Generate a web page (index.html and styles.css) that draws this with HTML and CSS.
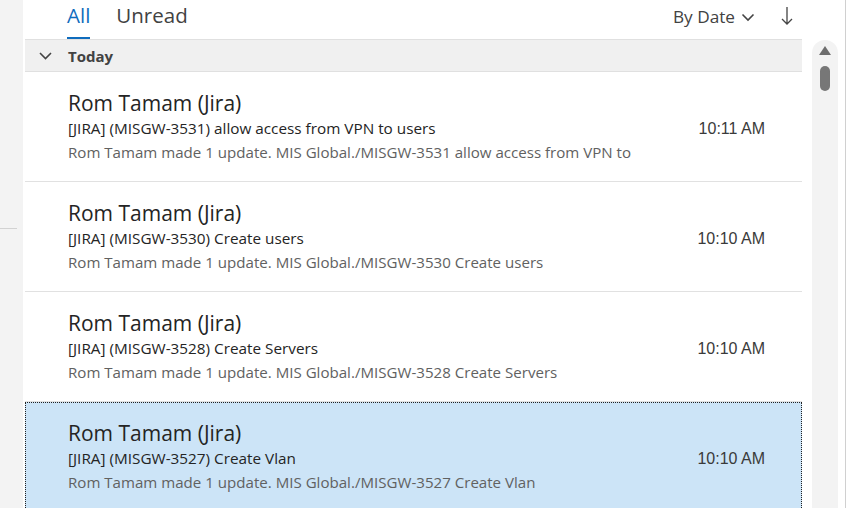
FILE: index.html
```html
<!DOCTYPE html>
<html>
<head>
<meta charset="utf-8">
<title>Inbox</title>
<link rel="stylesheet" href="styles.css">
</head>
<body>
	<div class="rail"><div class="rail-line"></div></div>
	<div class="pane">
		<div class="toolbar">
			<div class="tabs">
				<span class="tab active">All</span>
				<span class="tab">Unread</span>
			</div>
			<div class="sort">
				<span>By Date</span>
				<svg class="chev" width="14" height="9" viewBox="0 0 14 9"><path d="M1.5 1.5 L7 7 L12.5 1.5" fill="none" stroke="#444" stroke-width="1.6"/></svg>
				<svg class="arrow" width="12" height="20" viewBox="0 0 12 20"><path d="M6 1 V18 M1 13 L6 18 L11 13" fill="none" stroke="#444" stroke-width="1.3"/></svg>
			</div>
		</div>
		<div class="body">
			<div class="list">
				<div class="group">
					<svg width="13" height="8" viewBox="0 0 13 8"><path d="M1 1 L6.5 6.5 L12 1" fill="none" stroke="#444" stroke-width="1.6"/></svg>
					<span>Today</span>
				</div>
				<div class="mail">
					<div class="from">Rom Tamam (Jira)</div>
					<div class="line"><span class="subject">[JIRA] (MISGW-3531) allow access from VPN to users</span><span class="time">10:11 AM</span></div>
					<div class="preview">Rom Tamam made 1 update. MIS Global./MISGW-3531 allow access from VPN to</div>
				</div>
				<div class="mail">
					<div class="from">Rom Tamam (Jira)</div>
					<div class="line"><span class="subject">[JIRA] (MISGW-3530) Create users</span><span class="time">10:10 AM</span></div>
					<div class="preview">Rom Tamam made 1 update. MIS Global./MISGW-3530 Create users</div>
				</div>
				<div class="mail">
					<div class="from">Rom Tamam (Jira)</div>
					<div class="line"><span class="subject">[JIRA] (MISGW-3528) Create Servers</span><span class="time">10:10 AM</span></div>
					<div class="preview">Rom Tamam made 1 update. MIS Global./MISGW-3528 Create Servers</div>
				</div>
				<div class="mail selected">
					<div class="from">Rom Tamam (Jira)</div>
					<div class="line"><span class="subject">[JIRA] (MISGW-3527) Create Vlan</span><span class="time">10:10 AM</span></div>
					<div class="preview">Rom Tamam made 1 update. MIS Global./MISGW-3527 Create Vlan</div>
				</div>
			</div>
			<div class="scroll">
				<div class="scroll-up"></div>
				<div class="thumb"></div>
			</div>
		</div>
	</div>
</body>
</html>
```

FILE: styles.css
```css
*{
	margin: 0;
	padding: 0;
	box-sizing: border-box;
}
body{
	font-family: "Open Sans", "Noto Sans", sans-serif;
	color: #262626;
	background: #fff;
	display: flex;
	height: 508px;
	width: 850px;
	overflow: hidden;
}
.rail{
	width: 23px;
	background: #f3f3f3;
	flex: none;
}
.rail-line{
	margin-top: 228px;
	width: 17px;
	height: 1px;
	background: #d2d2d2;
}
.pane{
	width: 823px;
	border-right: 1px solid #d0d0d0;
	display: flex;
	flex-direction: column;
	flex: none;
}
.toolbar{
	height: 40px;
	flex: none;
	display: flex;
	justify-content: space-between;
	padding-left: 44px;
	padding-right: 52px;
}
.tabs{
	display: flex;
	gap: 26px;
}
.tab{
	font-size: 20.5px;
	color: #424242;
	line-height: 30px;
	height: 39px;
}
.tab.active{
	color: #0f6cbd;
	border-bottom: 2px solid #0f6cbd;
}
.sort{
	display: flex;
	align-items: center;
	height: 32px;
	font-size: 17.2px;
	color: #424242;
}
.chev{
	margin-left: 6px;
	margin-top: 2px;
}
.arrow{
	margin-left: 26px;
}
.body{
	flex: 1;
	display: flex;
}
.list{
	margin-left: 2px;
	width: 777px;
}
.group{
	height: 33px;
	background: #f0f0f0;
	border-top: 1px solid #e0e0e0;
	border-bottom: 1px solid #e0e0e0;
	margin-top: -1px;
	display: flex;
	align-items: center;
	padding-left: 14px;
	padding-top: 1px;
	font-size: 15px;
	font-weight: 700;
	color: #424242;
}
.group svg{
	margin-right: 16px;
}
.mail{
	height: 110px;
	border-bottom: 1px solid #e1e1e1;
	padding: 17px 37px 0 43px;
}
.mail.selected{
	background: #cce4f7;
	border: 1px dotted #222;
	padding: 16px 36px 0 42px;
}
.from{
	font-size: 21px;
	line-height: 28px;
	color: #242424;
}
.line{
	display: flex;
	justify-content: space-between;
	align-items: center;
	height: 22px;
	font-size: 15.3px;
	line-height: 22px;
	color: #242424;
}
.time{
	font-family: "Liberation Sans", Arial, sans-serif;
	font-size: 16px;
	line-height: 20px;
	color: #3a3a3a;
	margin-top: 2px;
}
.preview{
	font-size: 15.1px;
	line-height: 26px;
	color: #616161;
}
.scroll{
	margin-left: 10px;
	width: 26px;
	background: #f3f3f3;
	border-radius: 13px 13px 0 0;
	display: flex;
	flex-direction: column;
	align-items: center;
	padding-top: 6px;
}
.scroll-up{
	width: 0;
	height: 0;
	border-left: 6px solid transparent;
	border-right: 6px solid transparent;
	border-bottom: 9px solid #6e6e6e;
}
.thumb{
	margin-top: 11px;
	width: 10px;
	height: 25px;
	border-radius: 5px;
	background: #777;
}
```
